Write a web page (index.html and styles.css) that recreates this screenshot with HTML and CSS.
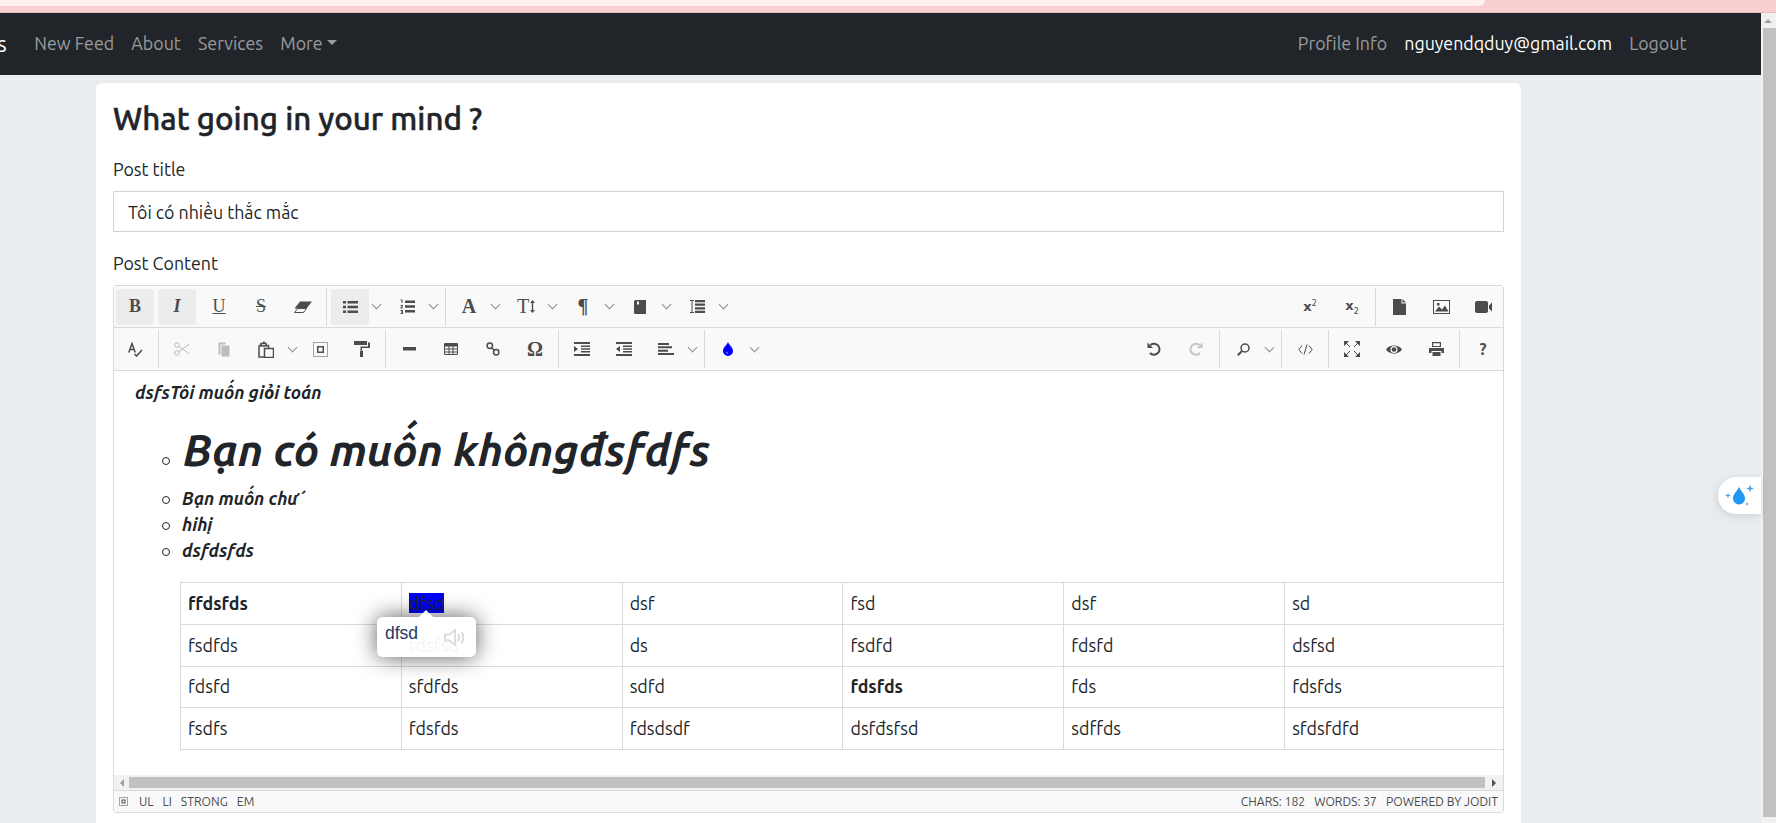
FILE: index.html
```html
<!DOCTYPE html>
<html lang="en">
<head>
    <meta charset="UTF-8">
    <title>New Feed</title>
    <link rel="stylesheet" href="styles.css">
</head>
<body>
    <div class="top-strip"><div class="top-tab"></div></div>
    <div class="page">
        <div class="main">
            <nav class="navbar">
                <div class="nav-group">
                    <a class="brand">s</a>
                    <a class="nav-link">New Feed</a>
                    <a class="nav-link">About</a>
                    <a class="nav-link">Services</a>
                    <a class="nav-link">More<span class="caret"></span></a>
                </div>
                <div class="nav-group">
                    <a class="nav-link">Profile Info</a>
                    <a class="nav-link active">nguyendqduy@gmail.com</a>
                    <a class="nav-link">Logout</a>
                </div>
            </nav>
            <div class="card">
                <h4>What going in your mind ?</h4>
                <label>Post title</label>
                <input class="title-input" type="text" value="Tôi có nhiều thắc mắc">
                <label>Post Content</label>
                <div class="editor">
                    <div class="tb-row">
                        <div class="tb-group first">
                            <span class="tb active serif"><b>B</b></span>
                            <span class="tb active serif"><b><i>I</i></b></span>
                            <span class="tb serif"><u>U</u></span>
                            <span class="tb serif"><s class="strike">S</s></span>
                            <span class="tb"><svg width="18" height="12" viewBox="0 0 18 12"><path d="M6 0.500h12l-5.500 7h-12z"/><path d="M0.500 11.500l3-4h9l-3 4z" class="st"/></svg></span>
                        </div>
                        <div class="tb-group">
                            <div class="split">
                                <span class="tb active"><svg width="15" height="12" viewBox="0 0 15 12"><path d="M0 0h3v2.500H0zM4.500 0H15v2.500H4.500zM0 4.700h3v2.500H0zM4.500 4.700H15v2.500H4.500zM0 9.400h3v2.500H0zM4.500 9.400H15v2.500H4.500z"/></svg></span><span class="arrow"></span>
                            </div>
                            <div class="split">
                                <span class="tb"><svg width="15" height="15" viewBox="0 0 15 15"><path d="M0.500 0.500h2v3.500h-1V1.500h-1zM0.500 6h2.500v1l-1.500 1.500H3v1H0.500v-1L2 7H0.500zM0.500 11H3v4H0.500v-1h1.500v-0.500H1v-1h1V12H0.500zM5 1.500h10v2.500H5zM5 6.300h10v2.500H5zM5 11h10v2.500H5z"/></svg></span><span class="arrow"></span>
                            </div>
                        </div>
                        <div class="tb-group no-border">
                            <div class="split"><span class="tb serif big-glyph"><b>A</b></span><span class="arrow"></span></div>
                            <div class="split"><span class="tb serif big-glyph">T<svg class="updown" width="5" height="13" viewBox="0 0 5 13"><path d="M2.500 0L5 3H3.200v7H5l-2.500 3L0 10h1.800V3H0z"/></svg></span><span class="arrow"></span></div>
                            <div class="split"><span class="tb serif big-glyph"><b>¶</b></span><span class="arrow"></span></div>
                            <div class="split"><span class="tb"><svg width="12" height="14" viewBox="0 0 12 14"><path d="M1.500 0H12v14H1.500A1.500 1.500 0 0 1 0 12.500v-11A1.500 1.500 0 0 1 1.500 0zM3 1.500V5l1-1 1 1V1.500z" fill-rule="evenodd"/></svg></span><span class="arrow"></span></div>
                            <div class="split"><span class="tb"><svg width="15" height="13" viewBox="0 0 15 13"><path d="M5 0h10v2.200H5zM5 3.600h10v2.200H5zM5 7.200h10v2.200H5zM5 10.800h10V13H5zM0 0h4v1H2.500v11H4v1H0v-1h1.500V1H0z"/></svg></span><span class="arrow"></span></div>
                        </div>
                        <div class="tb-group push-right">
                            <span class="tb script"><b>x<sup>2</sup></b></span>
                            <span class="tb script"><b>x<sub>2</sub></b></span>
                        </div>
                        <div class="tb-group no-border last">
                            <span class="tb"><svg width="13" height="16" viewBox="0 0 13 16"><path d="M0 0h8.500v4.500H13V16H0zM9.500 0L13 3.500H9.500z"/></svg></span>
                            <span class="tb"><svg width="17" height="14" viewBox="0 0 17 14"><path d="M0 0h17v14H0zM1 1v12h15V1zM2 11.500l4-5 3 3 3-4 3.500 6zM4 3h2.500v2.500H4z" fill-rule="evenodd"/></svg></span>
                            <span class="tb"><svg width="17" height="12" viewBox="0 0 17 12"><path d="M2 0h9a2 2 0 0 1 2 2v8a2 2 0 0 1-2 2H2a2 2 0 0 1-2-2V2a2 2 0 0 1 2-2zM14 4.500L17 1.500v9l-3-3z"/></svg></span>
                        </div>
                    </div>
                    <div class="tb-row second">
                        <div class="tb-group first">
                            <span class="tb"><svg width="15" height="15" viewBox="0 0 15 15"><path d="M0.800 10.500L4 1.500l3.200 9M2 7.500h4M6.500 12l2 2 5.500-6" class="st heavy"/></svg></span>
                        </div>
                        <div class="tb-group">
                            <span class="tb muted"><svg width="16" height="14" viewBox="0 0 16 14"><circle cx="3" cy="3" r="2.300" class="st"/><circle cx="3" cy="11" r="2.300" class="st"/><path d="M5 4.500L15.500 12M5 9.500L15.500 2" class="st"/></svg></span>
                            <span class="tb muted"><svg width="12" height="15" viewBox="0 0 12 15"><path d="M0.500 0.500h7v2h-5v10h-2z"/><path d="M3.500 3.500h8v11h-8z"/></svg></span>
                            <div class="split tight"><span class="tb"><svg width="16" height="17" viewBox="0 0 16 17"><path d="M1 4.500h3M8 4.500h2.500V7M1 4.500V16h5M5 2.500h3V5H3V2.500h1.500L6.500 0.800zM6.500 7.500h9v9h-9z" class="st heavy"/></svg></span><span class="arrow"></span></div>
                            <span class="tb"><svg width="15" height="15" viewBox="0 0 15 15"><path d="M0.500 0.500h14v14h-14z" class="st dotted"/><path d="M4 4h7v7H4zM5.500 5.500v4h4v-4z" fill-rule="evenodd"/></svg></span>
                            <span class="tb"><svg width="16" height="16" viewBox="0 0 16 16"><path d="M0 0h13v4H0zM14 1.500h2v5.500H8v2H6.500V5.500H14zM6 9.500h3V16H6z"/></svg></span>
                        </div>
                        <div class="tb-group">
                            <span class="tb"><svg width="13" height="4" viewBox="0 0 13 4"><path d="M0.500 0h12a0.500 0.500 0 0 1 0 3.500H0.500a0.500 0.500 0 0 1 0-3.500z"/></svg></span>
                            <span class="tb"><svg width="14" height="12" viewBox="0 0 14 12"><path d="M1 0h12a1 1 0 0 1 1 1v10a1 1 0 0 1-1 1H1a1 1 0 0 1-1-1V1a1 1 0 0 1 1-1zM1 3.500v2h3.500v-2zM5.500 3.500v2h3v-2zM9.500 3.500v2H13v-2zM1 6.500v2h3.500v-2zM5.500 6.500v2h3v-2zM9.500 6.500v2H13v-2zM1 9.500V11h3.500V9.500zM5.500 9.500V11h3V9.500zM9.500 9.500V11H13V9.500z" fill-rule="evenodd"/></svg></span>
                            <span class="tb"><svg width="14" height="14" viewBox="0 0 14 14"><circle cx="3.800" cy="3.800" r="2.700" class="st heavy"/><circle cx="10.200" cy="10.200" r="2.700" class="st heavy"/><path d="M5.500 5.500l3 3" class="st heavy"/></svg></span>
                            <span class="tb serif big-glyph"><b>Ω</b></span>
                        </div>
                        <div class="tb-group">
                            <span class="tb"><svg width="16" height="14" viewBox="0 0 16 14"><path d="M0 0h16v2H0zM7 3.500h9v1.500H7zM7 6.300h9v1.500H7zM7 9h9v1.500H7zM0 12h16v2H0zM0 4l4 3-4 3z"/></svg></span>
                            <span class="tb"><svg width="16" height="14" viewBox="0 0 16 14"><path d="M0 0h16v2H0zM7 3.500h9v1.500H7zM7 6.300h9v1.500H7zM7 9h9v1.500H7zM0 12h16v2H0zM4 4L0 7l4 3z"/></svg></span>
                            <div class="split"><span class="tb"><svg width="16" height="12" viewBox="0 0 16 12"><path d="M0 0h11v2H0zM0 3.300h14v2H0zM0 6.700h10v2H0zM0 10h16v2H0z"/></svg></span><span class="arrow"></span></div>
                        </div>
                        <div class="tb-group no-border">
                            <div class="split"><span class="tb"><svg width="10" height="14" viewBox="0 0 10 14"><path d="M5 0c1.500 3.500 5 5.500 5 9a5 5 0 0 1-10 0c0-3.500 3.500-5.500 5-9zM3.500 9.500a1.500 1.500 0 0 0 1.500 2z" fill="#0000ff" fill-rule="evenodd"/></svg></span><span class="arrow"></span></div>
                        </div>
                        <div class="tb-group push-right">
                            <span class="tb"><svg width="14" height="14" viewBox="0 0 14 14"><path d="M3.500 3A5.500 5.500 0 1 1 3 11" class="st thick"/><path d="M0.500 0.500l0 5.500h5.500z"/></svg></span>
                            <span class="tb faint"><svg width="14" height="14" viewBox="0 0 14 14"><path d="M10.500 3A5.500 5.500 0 1 0 11 11" class="st thick"/><path d="M13.500 0.500l0 5.500H8z"/></svg></span>
                        </div>
                        <div class="tb-group">
                            <div class="split"><span class="tb"><svg width="13" height="13" viewBox="0 0 13 13"><circle cx="8" cy="5" r="4" class="st heavy"/><path d="M5 8L0.800 12.200" class="st thick"/></svg></span><span class="arrow"></span></div>
                        </div>
                        <div class="tb-group">
                            <span class="tb"><svg width="15" height="11" viewBox="0 0 15 11"><path d="M4 1.500L0.800 5.500 4 9.500M11 1.500l3.200 4-3.200 4M9 0.500L6 10.500" class="st"/></svg></span>
                        </div>
                        <div class="tb-group">
                            <span class="tb"><svg width="16" height="16" viewBox="0 0 16 16"><path d="M1 1l5 5M15 1l-5 5M1 15l5-5M15 15l-5-5" class="st"/><path d="M0 0h5L0 5zM16 0v5l-5-5zM0 16v-5l5 5zM16 16h-5l5-5z"/></svg></span>
                            <span class="tb"><svg width="16" height="11" viewBox="0 0 16 11"><path d="M0 5.500C3 0 13 0 16 5.500 13 11 3 11 0 5.500zM8 2a3.500 3.500 0 1 0 0 7 3.500 3.500 0 0 0 0-7z" fill-rule="evenodd"/><circle cx="8" cy="5.500" r="2.300"/></svg></span>
                            <span class="tb"><svg width="15" height="14" viewBox="0 0 15 14"><path d="M3 0h9v5H3zM4.200 1.200v2.800h6.600V1.200zM0 6h15v5h-2.500V9h-10v2H0zM3.500 10h8v4h-8z" fill-rule="evenodd"/></svg></span>
                        </div>
                        <div class="tb-group no-border last">
                            <span class="tb"><b>?</b></span>
                        </div>
                    </div>
                    <div class="content">
                        <p class="line"><b><i>dsfsTôi muốn giỏi toán</i></b></p>
                        <ul>
                            <li class="big"><b><i>Bạn có muốn khôngđsfdfs</i></b></li>
                            <li><b><i>Bạn muốn chứ</i></b></li>
                            <li><b><i>hihị</i></b></li>
                            <li><b><i>dsfdsfds</i></b></li>
                        </ul>
                        <table>
                            <tr><td><b>ffdsfds</b></td><td><span class="selected">dfsd</span></td><td>dsf</td><td>fsd</td><td>dsf</td><td>sd</td></tr>
                            <tr><td>fsdfds</td><td>fdsfsd</td><td>ds</td><td>fsdfd</td><td>fdsfd</td><td>dsfsd</td></tr>
                            <tr><td>fdsfd</td><td>sfdfds</td><td>sdfd</td><td><b>fdsfds</b></td><td>fds</td><td>fdsfds</td></tr>
                            <tr><td>fsdfs</td><td>fdsfds</td><td>fdsdsdf</td><td>dsfđsfsd</td><td>sdffds</td><td>sfdsfdfd</td></tr>
                        </table>
                    </div>
                    <div class="h-scroll">
                        <div class="sc-end start"><span class="sc-arrow left"></span></div>
                        <div class="sc-thumb"></div>
                        <div class="sc-end"><span class="sc-arrow right"></span></div>
                    </div>
                    <div class="status">
                        <div class="status-group">
                            <svg class="grip" width="9" height="9" viewBox="0 0 9 9"><path d="M0.500 0.500h8v8h-8z" class="st dotted"/><path d="M2.500 2.500h4v4h-4zM3.500 3.500v2h2v-2z" fill-rule="evenodd"/></svg>
                            <span>UL</span><span>LI</span><span>STRONG</span><span>EM</span>
                        </div>
                        <div class="status-group">
                            <span>CHARS: 182</span><span>WORDS: 37</span><span>POWERED BY JODIT</span>
                        </div>
                    </div>
                </div>
            </div>
        </div>
        <div class="page-scroll">
            <span class="up-arrow"></span>
            <div class="page-thumb"></div>
        </div>
    </div>
    <div class="popup">
        <span class="popup-word">dfsd</span>
        <svg width="23" height="17" viewBox="0 0 23 17"><path d="M1 5.500h4.500L11 1v15l-5.500-4.500H1z" class="speaker"/><path d="M14 5c1.500 2 1.500 5 0 7M17.500 3c2.500 3 2.500 8 0 11" class="speaker"/></svg>
    </div>
    <div class="float-btn">
        <svg width="30" height="24" viewBox="0 0 30 24"><path d="M14 3c2 4.500 6 7 6 11.500a6 6 0 0 1-12 0C8 10 12 7.500 14 3z"/><path d="M25 0.500l1 3 3 1-3 1-1 3-1-3-3-1 3-1zM3 8.500l0.700 2.300 2.300 0.700-2.300 0.700L3 14.500l-0.700-2.300L0 11.500l2.300-0.700zM22 18l0.500 1.500 1.500 0.500-1.500 0.500-0.500 1.500-0.500-1.500L20 20l1.500-0.500z" class="spark"/></svg>
    </div>
</body>
</html>
```

FILE: styles.css
```css
* {
    box-sizing: border-box;
}
html, body {
    height: 823px;
    overflow: hidden;
}
body {
    margin: 0;
    background: #e9edf0;
    font-family: Ubuntu, "Open Sans", "Noto Sans", sans-serif;
    font-size: 17.8px;
    color: #212529;
}
.top-strip {
    height: 13px;
    background: #f9cfcf;
    border-bottom: 1px solid #e3bcbc;
}
.top-tab {
    width: 1485px;
    height: 6px;
    background: #fff1ee;
    border-bottom-right-radius: 6px;
}
.page {
    display: flex;
    height: 810px;
}
.main {
    flex: 1;
    min-width: 0;
}
.navbar {
    height: 62px;
    background: #212529;
    display: flex;
    justify-content: space-between;
    align-items: center;
    padding: 0 66px 2px 0;
}
.nav-group {
    display: flex;
    align-items: center;
}
.brand {
    color: #fff;
    font-size: 22.5px;
    margin: 0 19px 0 -3px;
}
.nav-link {
    color: rgba(255, 255, 255, 0.55);
    padding: 0 8.6px;
}
.nav-link.active {
    color: #fff;
}
.caret {
    display: inline-block;
    margin-left: 0.255em;
    vertical-align: 0.255em;
    border-top: 0.3em solid;
    border-left: 0.3em solid transparent;
    border-right: 0.3em solid transparent;
}
.card {
    width: 1425px;
    height: 760px;
    margin: 8px 0 0 96px;
    background: #fff;
    border-radius: 6px;
    padding: 17px 17px;
}
h4 {
    margin: 0 0 18px;
    font-size: 31.3px;
    font-weight: 500;
    line-height: 38px;
    -webkit-text-stroke: 0.5px #212529;
}
label {
    display: block;
    line-height: 27px;
    margin-bottom: 8px;
}
.title-input {
    display: block;
    width: 100%;
    height: 41px;
    border: 1px solid #ced4da;
    padding: 0 14px;
    font: inherit;
    color: #212529;
    margin-bottom: 18px;
}

/* jodit editor */
.editor {
    border: 1px solid #dadada;
    border-radius: 3px;
    width: 1391px;
}
.tb-row {
    display: flex;
    align-items: center;
    height: 42px;
    padding: 0 1px 0 2px;
    background: #f9f9f9;
    border-bottom: 1px solid #dadada;
}
.tb-row.second {
    height: 43px;
}
.tb-group {
    display: flex;
    align-items: center;
    gap: 4px;
    height: 38px;
    padding: 0 4px;
    border-right: 1px solid #dadada;
}
.tb-group.first {
    padding-left: 0;
}
.tb-group.no-border {
    border-right: none;
}
.tb-group.last {
    padding-right: 0;
}
.tb-group.push-right {
    margin-left: auto;
}
.split {
    display: flex;
    align-items: center;
    width: 53px;
}
.split.tight {
    margin-right: -3px;
}
.tb {
    width: 38px;
    height: 36px;
    flex: none;
    display: flex;
    align-items: center;
    justify-content: center;
    border-radius: 3px;
    color: #4c4c4c;
    fill: #4c4c4c;
    font-size: 16px;
}
.tb.active {
    background: #ececec;
}
.tb.serif {
    font-family: "Liberation Serif", serif;
    font-size: 18px;
}
.tb.big-glyph {
    font-size: 20px;
}
.tb.script {
    font-family: "DejaVu Sans", sans-serif;
    font-size: 13px;
}
.tb.script sup, .tb.script sub {
    font-size: 8px;
    font-weight: normal;
}
.tb.muted {
    opacity: 0.35;
}
.tb.faint {
    opacity: 0.3;
}
.strike {
    padding: 0 2px;
}
.updown {
    margin-left: 1px;
}
.arrow {
    width: 7px;
    height: 7px;
    margin: 0 0 4px 4px;
    border-right: 1.2px solid #8c8c8c;
    border-bottom: 1.2px solid #8c8c8c;
    transform: rotate(45deg);
}
.st {
    fill: none;
    stroke: #4c4c4c;
    stroke-width: 1;
}
.st.heavy {
    stroke-width: 1.5;
}
.st.thick {
    stroke-width: 2;
}
.st.dotted {
    stroke-dasharray: 1 1;
}
.content {
    height: 404px;
    padding: 8px 21px;
    overflow: hidden;
    background: #fff;
    line-height: 27px;
}
.line {
    margin: 0 0 17px;
}
ul {
    margin: 0 0 19px;
    padding-left: 45px;
    list-style: none;
    line-height: 26px;
}
li::before {
    content: "";
    display: inline-block;
    width: 6px;
    height: 6px;
    margin: 0 12px 0 -18px;
    border: 1px solid #212529;
    border-radius: 50%;
    vertical-align: 1px;
}
li.big {
    font-size: 44px;
    line-height: 53px;
    margin-bottom: 9px;
}
li.big b {
    margin-left: 1px;
}
table {
    border-collapse: collapse;
    margin-left: 45px;
    width: 1326px;
    table-layout: fixed;
}
td {
    border: 1px solid #dadada;
    height: 41.75px;
    padding: 0 7px;
}
.selected {
    background: #0000ff;
}
.h-scroll {
    height: 15px;
    background: #f1f1f1;
    display: flex;
    align-items: center;
}
.sc-end {
    width: 18px;
    display: flex;
    justify-content: center;
}
.sc-end.start {
    width: 15px;
}
.sc-thumb {
    flex: 1;
    height: 11px;
    background: #c1c1c1;
}
.sc-arrow {
    border-top: 4px solid transparent;
    border-bottom: 4px solid transparent;
}
.sc-arrow.left {
    border-right: 4px solid #a0a0a0;
}
.sc-arrow.right {
    border-left: 4px solid #505050;
}
.status {
    height: 22px;
    display: flex;
    justify-content: space-between;
    align-items: center;
    padding: 0 5px;
    font-size: 12.2px;
    color: #4c4c4c;
    background: #f9f9f9;
    border-top: 1px solid #dadada;
}
.status-group {
    display: flex;
    align-items: center;
    gap: 9px;
}
.grip {
    fill: #4c4c4c;
    margin-right: 2px;
}
.page-scroll {
    width: 15px;
    flex: none;
    background: #f1f1f1;
    display: flex;
    flex-direction: column;
    align-items: flex-end;
}
.up-arrow {
    margin: 6px 4px 5px 0;
    border-left: 4px solid transparent;
    border-right: 4px solid transparent;
    border-bottom: 4px solid #a0a0a0;
}
.page-thumb {
    width: 13px;
    height: 789px;
    background: #c1c1c1;
}
.popup {
    position: absolute;
    left: 377px;
    top: 617px;
    width: 99px;
    height: 40px;
    background: rgba(255, 255, 255, 0.95);
    border-radius: 6px;
    box-shadow: 0 0 22px rgba(0, 0, 0, 0.65);
    display: flex;
    align-items: center;
    padding: 0 9px 0 8px;
    justify-content: space-between;
    font-family: "Liberation Sans", sans-serif;
}
.popup::before {
    content: "";
    position: absolute;
    left: 44px;
    top: -5px;
    width: 10px;
    height: 10px;
    background: #fff;
    transform: rotate(45deg);
}
.popup-word {
    color: #1f3864;
    font-size: 17.5px;
    margin-bottom: 8px;
}
.speaker {
    fill: none;
    stroke: #dcdcdc;
    stroke-width: 2;
}
.float-btn {
    position: absolute;
    left: 1718px;
    top: 477px;
    width: 43px;
    height: 37px;
    background: #fff;
    border-radius: 18px 0 0 18px;
    box-shadow: -1px 2px 8px rgba(0, 0, 0, 0.12);
    padding: 7px 0 0 7px;
    fill: #2196f3;
}
.spark {
    fill: #42a5f5;
}
```
